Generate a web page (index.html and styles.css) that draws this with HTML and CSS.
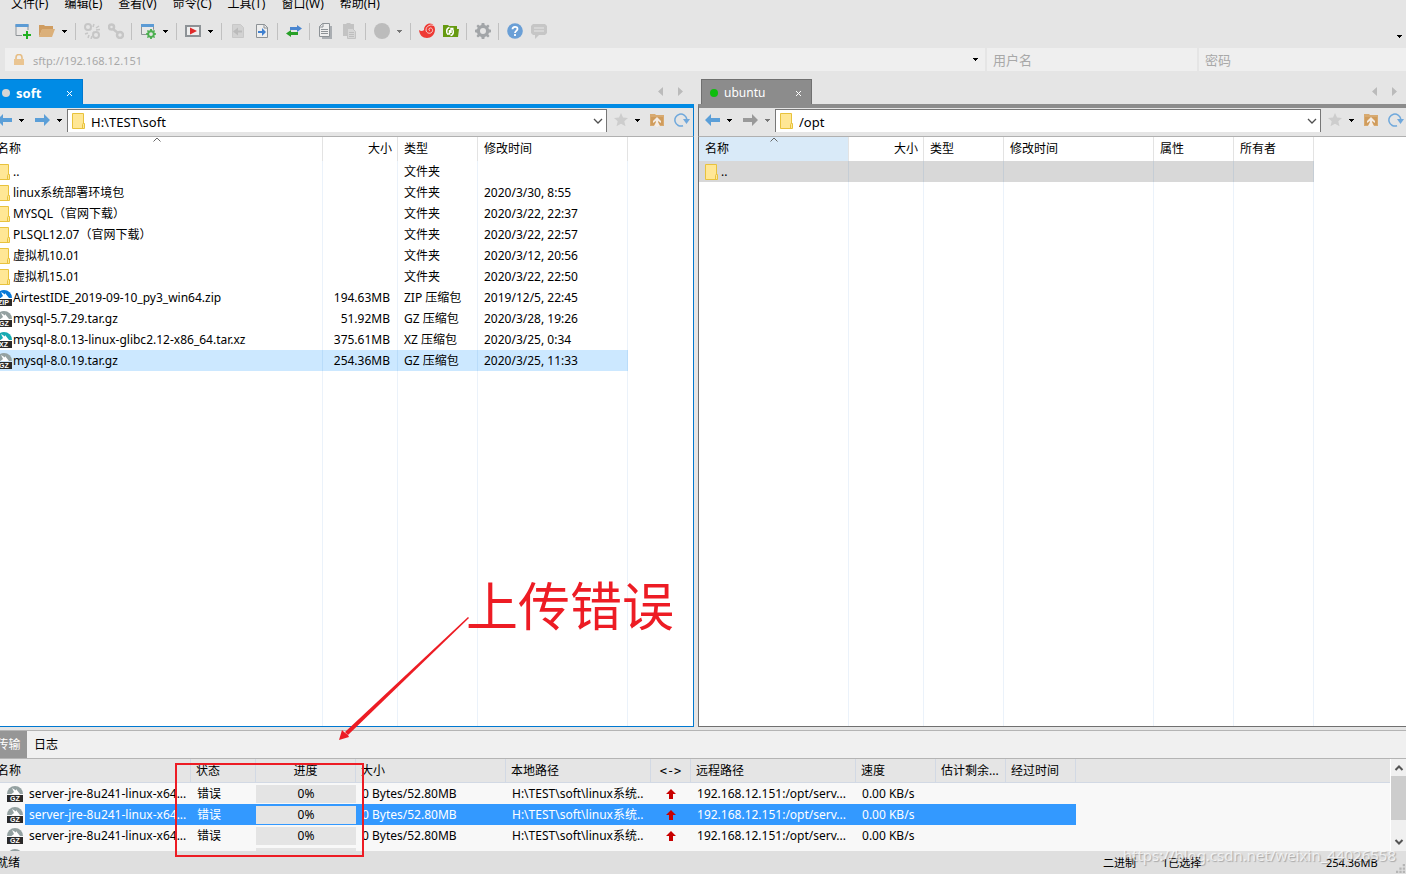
FILE: index.html
```html
<!DOCTYPE html>
<html lang="zh-CN">
<head>
<meta charset="utf-8">
<title>soft</title>
<link rel="stylesheet" href="styles.css">
</head>
<body>
<svg class="defs" aria-hidden="true">
  <symbol id="caret" viewBox="0 0 5 3"><path d="M0 0h5v1H4v1H3v1H2V2H1V1H0z"/></symbol>
  <symbol id="folder" viewBox="0 0 14 16"><path d="M.5.5h11v10h1v5H.5z" fill="#ffe795" stroke="#e8c23c"/><path d="M10.500 15v-3.500l1-1.500" fill="none" stroke="#e8c23c"/></symbol>
  <symbol id="back" viewBox="0 0 16 12"><path d="M0 6l6-6v4h9v4H6v4z"/></symbol>
  <symbol id="forward" viewBox="0 0 16 12"><path d="M15 6L9 0v4H0v4h9v4z"/></symbol>
  <symbol id="star" viewBox="0 0 14 14"><path d="M7 0l2 4.500 5 .5-3.700 3.300 1.200 5L7 10.700l-4.500 2.600 1.200-5L0 5l5-.5z" fill="#cdcdcd"/></symbol>
  <symbol id="up" viewBox="0 0 14 14"><path d="M0 1h5l1 1h8v11H0z" fill="#d8aa70"/><path d="M1 4h12v8H1z" fill="#d09c5c"/><path d="M7 4l4 4v2L8 8v6H6V8l-3 2V8z" fill="#f4ece4"/><path d="M6 9h2l2 4H4z" fill="#f4ece4"/></symbol>
  <symbol id="refresh" viewBox="0 0 16 14"><path d="M9 12.700A6 6 0 1 1 12.800 6" fill="none" stroke="#6fa8dc" stroke-width="1.500"/><path d="M9 6h7l-3.500 5z" fill="#6fa8dc"/></symbol>
  <symbol id="chev" viewBox="0 0 10 6"><path d="M1 1l4 4 4-4" fill="none" stroke="#505050" stroke-width="1.300"/></symbol>
  <symbol id="sort" viewBox="0 0 8 5"><path d="M.5 4.500L4 1l3.500 3.500" fill="none" stroke="#666"/></symbol>
  <symbol id="arch" viewBox="0 0 16 16"><path d="M0 8a8 8 0 0 1 16 0z" fill="currentColor"/><path d="M5 2l4 2.500V3l4 5H4.500l2.500-2z" fill="#fff"/><path d="M0 9h16v7H0z" fill="#2a2a2a"/></symbol>
  <symbol id="gear" viewBox="0 0 16 16"><path fill-rule="evenodd" d="M6.700 0h2.600l.4 2 1.600.7L13 1.500 14.500 3l-1.200 1.700.7 1.600 2 .4v2.600l-2 .4-.7 1.600 1.200 1.700-1.500 1.500-1.700-1.200-1.600.7-.4 2H6.700l-.4-2-1.600-.7L3 14.500 1.500 13l1.200-1.700L2 9.700l-2-.4V6.700l2-.4.700-1.600L1.500 3 3 1.500l1.700 1.200L6.300 2zM8 5a3 3 0 1 0 0 6 3 3 0 0 0 0-6z"/></symbol>
  <symbol id="red-up" viewBox="0 0 10 10"><path d="M5 0l5 5H7v5H3V5H0z" fill="#c80000"/></symbol>
</svg>
<div class="app">
  <nav class="menu">
    <button>文件(F)</button><button>编辑(E)</button><button>查看(V)</button><button>命令(C)</button><button>工具(T)</button><button>窗口(W)</button><button>帮助(H)</button>
  </nav>
  <div class="tools">
    <button class="tool" aria-label="新建"><svg viewBox="0 0 16 16"><path d="M1 1.500h12v11H1z" fill="#e8e8e8" stroke="#8d9296"/><path d="M.5 1h13v3H.5z" fill="#5b9bd5"/><path d="M10 7h4v9h-4zM7 10h9v3H7z" fill="#e5e5e5"/><path d="M11 8h2v3h3v2h-3v3h-2v-3H8v-2h3z" fill="#21b021"/></svg></button>
    <button class="tool" aria-label="打开"><svg viewBox="0 0 16 16"><path d="M0 2h5l1 1h8v4H3L0 14z" fill="#cf9c60"/><path d="M3 6h13l-3 8H0z" fill="#dbb07a"/></svg></button>
    <button class="drop" aria-label="更多"><svg><use href="#caret"/></svg></button><span class="sep"></span>
    <button class="tool" aria-label="重新连接"><svg viewBox="0 0 16 16" fill="none" stroke="#c6c6c6" stroke-width="2"><circle cx="4" cy="4" r="3"/><circle cx="12" cy="12" r="3"/><path d="M6 6l1 1M9 9l1 1"/><path d="M9 4l1-3M12 5l3-2M1 11l3-1M4 15l1-3M12 7l4-.5M7 16l1-3" stroke-width="1.500"/></svg></button>
    <button class="tool" aria-label="断开"><svg viewBox="0 0 16 16" fill="none" stroke="#c6c6c6" stroke-width="2.500"><circle cx="3.500" cy="4" r="2.500"/><circle cx="12" cy="12" r="3"/><path d="M5 6l5 4"/></svg></button><span class="sep"></span>
    <button class="tool" aria-label="属性"><svg viewBox="0 0 16 16"><path d="M1.500 1.500h12v10h-12z" fill="#e8e8e8" stroke="#8d9296"/><path d="M1 1h13v3H1z" fill="#5b9bd5"/><circle cx="11" cy="11" r="5" fill="#e5e5e5"/><use href="#gear" x="6" y="6" width="10" height="10" fill="#4caf50"/></svg></button>
    <button class="drop" aria-label="更多"><svg><use href="#caret"/></svg></button><span class="sep"></span>
    <button class="tool" aria-label="运行"><svg viewBox="0 0 16 16"><path d="M1 3h14v10H1z" fill="#eee" stroke="#8d9296" stroke-width="2"/><path d="M5 4.500l7 3.500-7 3.500z" fill="#e02b2b"/></svg></button>
    <button class="drop" aria-label="更多"><svg><use href="#caret"/></svg></button><span class="sep"></span>
    <button class="tool" aria-label="传回"><svg viewBox="0 0 16 16"><path d="M2.500 1.500h8l3 3v10h-11z" fill="#d2d2d2" stroke="#c8c8c8"/><path d="M3 8.500l5-4v3h4v2H8v3z" fill="#bbb"/></svg></button>
    <button class="tool" aria-label="传送"><svg viewBox="0 0 16 16"><path d="M2.500 1.500h8l3 3v10h-11z" fill="#eee" stroke="#8d9296"/><path d="M10 1v4h4" fill="none" stroke="#8d9296"/><path d="M12 9L8 5v3H4v2h4v3z" fill="#3f80d0"/></svg></button><span class="sep"></span>
    <button class="tool" aria-label="同步"><svg viewBox="0 0 16 16"><path d="M4 4h7V2l5 3.500L11 9V7H4z" fill="#4a86d0"/><path d="M12 9H5V7l-5 3.500L5 14v-2h7z" fill="#28a028"/></svg></button><span class="sep"></span>
    <button class="tool" aria-label="复制"><svg viewBox="0 0 16 16"><path d="M4 3h10v13H4z" fill="#aaaeb2"/><path d="M4.500.5h7v13h-10v-10z" fill="#eee" stroke="#8d9296"/><path d="M1 4h4V0M3 6.500h7M3 8.500h7M3 10.500h7" fill="none" stroke="#8d9296"/></svg></button>
    <button class="tool" aria-label="粘贴"><svg viewBox="0 0 16 16"><path d="M1 1h3l1-1h3l1 1h3v12H1z" fill="#c3c3c3"/><path d="M5.500 5.500h5l3 3v7h-8z" fill="#d6d6d6" stroke="#c3c3c3"/><path d="M7 9.500h5M7 11.500h5M7 13.500h5" stroke="#bdbdbd"/></svg></button><span class="sep"></span>
    <button class="tool" aria-label="停止"><svg viewBox="0 0 16 16"><circle cx="8" cy="8" r="8" fill="#bcbcbc"/></svg></button>
    <button class="drop off" aria-label="更多"><svg><use href="#caret"/></svg></button><span class="sep"></span>
    <button class="tool" aria-label="Xshell"><svg viewBox="0 0 16 16"><path d="M0 7c2 1.500 4 1 5 0C5 3 8 .5 11 .5c3 0 5 3 5 6 0 5-4 8.500-8 8.500-4.500 0-7.500-3-8-8z" fill="#ee3a34"/><path d="M15.500 3C12 .5 7 3 7 7c0 3 4 4.500 6 2 1.500-2 0-4.500-2-4-1.500.5-1.500 2.500 0 2.500" fill="none" stroke="#f6d3d0"/></svg></button>
    <button class="tool" aria-label="Xftp"><svg viewBox="0 0 16 16"><path d="M0 2h5l1 1h8v3h2l-1 8H0z" fill="#669a10"/><path d="M6.500 4.500C3 5 3 10 5 11.500M4 11h2.500V7M7.500 12.500C11 12 11 7 9 5.500M10.500 5.500H8V10" fill="none" stroke="#fff" stroke-width="1.500"/></svg></button><span class="sep"></span>
    <button class="tool" aria-label="选项"><svg viewBox="0 0 16 16"><use href="#gear" fill="#a2a5a8"/></svg></button><span class="sep"></span>
    <button class="tool" aria-label="帮助"><svg viewBox="0 0 16 16"><circle cx="8" cy="8" r="7.800" fill="#6a9fd6"/><path d="M5.500 6.300C5.500 3 10.500 3 10.500 6c0 1.800-2.500 2-2.500 4M8 11v2" fill="none" stroke="#fff" stroke-width="1.800"/></svg></button>
    <button class="tool" aria-label="反馈"><svg viewBox="0 0 16 16"><path d="M2 1h12l2 2v7l-2 2H8l-4 4v-4H2l-2-2V3z" fill="#c6c6c6"/><path d="M3 5h10M3 8h10" stroke="#dcdcdc" stroke-width="1.500"/></svg></button>
    <button class="drop more" aria-label="工具栏选项"><svg><use href="#caret"/></svg></button>
  </div>
  <div class="address">
    <label class="host"><svg viewBox="0 0 10 12"><path d="M2 5V3.500a3 3 0 0 1 6 0V5" fill="none" stroke="#e6bd84" stroke-width="1.600"/><path d="M0 5h10v6H0z" fill="#eac592"/></svg><input aria-label="地址" value="sftp://192.168.12.151"><svg class="caret"><use href="#caret"/></svg></label>
    <input class="user" aria-label="用户名" placeholder="用户名">
    <input class="pass" type="password" aria-label="密码" placeholder="密码">
  </div>
  <main class="panes">
    <section class="pane local">
      <div class="tabs"><button class="tab"><i class="dot"></i><span>soft</span><svg class="x" viewBox="0 0 5 5"><path d="M0 0l5 5M5 0L0 5" stroke="#fff"/></svg></button>
        <div class="pager"><svg viewBox="0 0 25 9"><path d="M5 0v9L0 4.500zM20 0v9l5-4.500z" fill="#bbb"/></svg></div></div>
      <div class="bar">
        <button class="nav" aria-label="后退"><svg><use href="#back"/></svg></button><button class="drop" aria-label="后退记录"><svg><use href="#caret"/></svg></button>
        <button class="nav" aria-label="前进"><svg><use href="#forward"/></svg></button><button class="drop" aria-label="前进记录"><svg><use href="#caret"/></svg></button>
        <label class="path"><svg class="fold"><use href="#folder"/></svg><input aria-label="本地路径" value="H:\TEST\soft"><svg class="chev"><use href="#chev"/></svg></label>
        <button class="act" aria-label="收藏"><svg><use href="#star"/></svg></button><button class="drop" aria-label="收藏夹"><svg><use href="#caret"/></svg></button>
        <button class="act" aria-label="上级"><svg><use href="#up"/></svg></button><button class="act last" aria-label="刷新"><svg><use href="#refresh"/></svg></button>
      </div>
      <div class="list">
        <table>
          <colgroup><col class="w332"><col class="w75"><col class="w80"><col class="w150"><col></colgroup>
          <thead><tr><th>名称<svg class="sort"><use href="#sort"/></svg></th><th class="num">大小</th><th>类型</th><th>修改时间</th><th></th></tr></thead>
          <tbody>
            <tr><td><div class="file"><svg class="fold"><use href="#folder"/></svg>..</div></td><td></td><td>文件夹</td><td></td><td></td></tr>
            <tr><td><div class="file"><svg class="fold"><use href="#folder"/></svg>linux系统部署环境包</div></td><td></td><td>文件夹</td><td>2020/3/30, 8:55</td><td></td></tr>
            <tr><td><div class="file"><svg class="fold"><use href="#folder"/></svg>MYSQL（官网下载）</div></td><td></td><td>文件夹</td><td>2020/3/22, 22:37</td><td></td></tr>
            <tr><td><div class="file"><svg class="fold"><use href="#folder"/></svg>PLSQL12.07（官网下载）</div></td><td></td><td>文件夹</td><td>2020/3/22, 22:57</td><td></td></tr>
            <tr><td><div class="file"><svg class="fold"><use href="#folder"/></svg>虚拟机10.01</div></td><td></td><td>文件夹</td><td>2020/3/12, 20:56</td><td></td></tr>
            <tr><td><div class="file"><svg class="fold"><use href="#folder"/></svg>虚拟机15.01</div></td><td></td><td>文件夹</td><td>2020/3/22, 22:50</td><td></td></tr>
            <tr><td><div class="file"><svg class="arch zip" viewBox="0 0 16 16"><use href="#arch"/><text x="2" y="15">ZIP</text></svg>AirtestIDE_2019-09-10_py3_win64.zip</div></td><td class="num">194.63MB</td><td>ZIP 压缩包</td><td>2019/12/5, 22:45</td><td></td></tr>
            <tr><td><div class="file"><svg class="arch" viewBox="0 0 16 16"><use href="#arch"/><text x="3" y="15">GZ</text></svg>mysql-5.7.29.tar.gz</div></td><td class="num">51.92MB</td><td>GZ 压缩包</td><td>2020/3/28, 19:26</td><td></td></tr>
            <tr><td><div class="file"><svg class="arch xz" viewBox="0 0 16 16"><use href="#arch"/><text x="3" y="15">XZ</text></svg>mysql-8.0.13-linux-glibc2.12-x86_64.tar.xz</div></td><td class="num">375.61MB</td><td>XZ 压缩包</td><td>2020/3/25, 0:34</td><td></td></tr>
            <tr class="sel"><td><div class="file"><svg class="arch" viewBox="0 0 16 16"><use href="#arch"/><text x="3" y="15">GZ</text></svg>mysql-8.0.19.tar.gz</div></td><td class="num">254.36MB</td><td>GZ 压缩包</td><td>2020/3/25, 11:33</td><td></td></tr>
            <tr class="fill"><td></td><td></td><td></td><td></td><td></td></tr>
          </tbody>
        </table>
      </div>
    </section>
    <section class="pane remote">
      <div class="tabs"><button class="tab"><i class="dot"></i><span>ubuntu</span><svg class="x" viewBox="0 0 5 5"><path d="M0 0l5 5M5 0L0 5" stroke="#fff"/></svg></button>
        <div class="pager"><svg viewBox="0 0 25 9"><path d="M5 0v9L0 4.500zM20 0v9l5-4.500z" fill="#bbb"/></svg></div></div>
      <div class="bar">
        <button class="nav" aria-label="后退"><svg><use href="#back"/></svg></button><button class="drop" aria-label="后退记录"><svg><use href="#caret"/></svg></button>
        <button class="nav off" aria-label="前进"><svg><use href="#forward"/></svg></button><button class="drop off" aria-label="前进记录"><svg><use href="#caret"/></svg></button>
        <label class="path"><svg class="fold"><use href="#folder"/></svg><input aria-label="远程路径" value="/opt"><svg class="chev"><use href="#chev"/></svg></label>
        <button class="act" aria-label="收藏"><svg><use href="#star"/></svg></button><button class="drop" aria-label="收藏夹"><svg><use href="#caret"/></svg></button>
        <button class="act" aria-label="上级"><svg><use href="#up"/></svg></button><button class="act last" aria-label="刷新"><svg><use href="#refresh"/></svg></button>
      </div>
      <div class="list">
        <table>
          <colgroup><col class="w150"><col class="w75"><col class="w80"><col class="w150"><col class="w80"><col class="w80"><col></colgroup>
          <thead><tr><th class="sorted">名称<svg class="sort"><use href="#sort"/></svg></th><th class="num">大小</th><th>类型</th><th>修改时间</th><th>属性</th><th>所有者</th><th></th></tr></thead>
          <tbody>
            <tr class="sel"><td><div class="file"><svg class="fold"><use href="#folder"/></svg>..</div></td><td></td><td></td><td></td><td></td><td></td><td></td></tr>
            <tr class="fill"><td></td><td></td><td></td><td></td><td></td><td></td><td></td></tr>
          </tbody>
        </table>
      </div>
    </section>
  </main>
  <section class="transfers">
    <div class="dock"><button class="on">传输</button><button>日志</button></div>
    <div class="queue">
      <div class="rows">
        <table>
          <colgroup><col class="w35"><col class="w166"><col class="w65"><col class="w100"><col class="w150"><col class="w145"><col class="w40"><col class="w165"><col class="w80"><col class="w70"><col class="w70"><col></colgroup>
          <thead><tr><th colspan="2" class="first">名称</th><th>状态</th><th class="mid">进度</th><th>大小</th><th>本地路径</th><th class="mid mono">&lt;-&gt;</th><th>远程路径</th><th>速度</th><th>估计剩余...</th><th>经过时间</th><th></th></tr></thead>
          <tbody>
            <tr><td class="ic"><svg class="arch" viewBox="0 0 16 16"><use href="#arch"/><text x="3" y="15">GZ</text></svg></td><td class="nm">server-jre-8u241-linux-x64...</td><td>错误</td><td class="pg"><div>0%</div></td><td>0 Bytes/52.80MB</td><td>H:\TEST\soft\linux系统..</td><td class="mid"><svg class="red"><use href="#red-up"/></svg></td><td>192.168.12.151:/opt/serv...</td><td>0.00 KB/s</td><td></td><td></td><td></td></tr>
            <tr class="sel"><td class="ic"><svg class="arch" viewBox="0 0 16 16"><use href="#arch"/><text x="3" y="15">GZ</text></svg></td><td class="nm">server-jre-8u241-linux-x64...</td><td>错误</td><td class="pg"><div>0%</div></td><td>0 Bytes/52.80MB</td><td>H:\TEST\soft\linux系统..</td><td class="mid"><svg class="red"><use href="#red-up"/></svg></td><td>192.168.12.151:/opt/serv...</td><td>0.00 KB/s</td><td></td><td></td><td></td></tr>
            <tr><td class="ic"><svg class="arch" viewBox="0 0 16 16"><use href="#arch"/><text x="3" y="15">GZ</text></svg></td><td class="nm">server-jre-8u241-linux-x64...</td><td>错误</td><td class="pg"><div>0%</div></td><td>0 Bytes/52.80MB</td><td>H:\TEST\soft\linux系统..</td><td class="mid"><svg class="red"><use href="#red-up"/></svg></td><td>192.168.12.151:/opt/serv...</td><td>0.00 KB/s</td><td></td><td></td><td></td></tr>
            <tr><td class="ic"><svg class="arch" viewBox="0 0 16 16"><use href="#arch"/></svg></td><td></td><td></td><td class="pg"><div></div></td><td></td><td></td><td></td><td></td><td></td><td></td><td></td><td></td></tr>
          </tbody>
        </table>
      </div>
      <div class="scroll"><svg viewBox="0 0 10 6"><path d="M1.500 5L5 1.500 8.500 5" fill="none" stroke="#555" stroke-width="2"/></svg><i></i><svg viewBox="0 0 10 6"><path d="M1.500 1L5 4.500 8.500 1" fill="none" stroke="#555" stroke-width="2"/></svg></div>
    </div>
  </section>
  <footer class="status"><span class="ready">就绪</span><span class="mode">二进制</span><span class="count">1已选择</span><span class="size">254.36MB</span>
    <svg class="grip" viewBox="0 0 8 8"><path d="M6 0h2v2H6zM3 3h2v2H3zM6 3h2v2H6zM0 6h2v2H0zM3 6h2v2H3zM6 6h2v2H6z" fill="#b5b5b5"/></svg></footer>
  <div class="note">上传错误</div>
  <svg class="arrow" viewBox="0 0 130 124"><path d="M130 1L9 118l-3-3L129 0z" fill="#ed1c24"/><path d="M0 123l3-10 2 2 4 3 1 2z" fill="#ed1c24"/></svg>
  <div class="frame"></div>
  <div class="mark">https://blog.csdn.net/weixin_44026558</div>
</div>
</body>
</html>
```

FILE: styles.css
```css
* { box-sizing: border-box; }
html, body { height: 100%; }
body {
  margin: 0;
  overflow: hidden;
  background: #e5e5e5;
  color: #000;
  font: 12px/16px "Noto Sans", "Noto Sans CJK SC", sans-serif;
}
button, input {
  margin: 0;
  padding: 0;
  border: 0;
  background: none;
  color: inherit;
  font: inherit;
}
svg { display: block; flex: none; }
.defs { position: absolute; width: 0; height: 0; }

/* The window sits partly past the left edge of the screen. */
.app {
  position: relative;
  display: flex;
  flex-direction: column;
  height: 100%;
  margin-left: -10px;
  overflow: hidden;
}

.menu {
  display: flex;
  flex: none;
  align-items: flex-end;
  gap: 16px;
  height: 12px;
  padding-left: 21px;
}

.tools {
  display: flex;
  flex: none;
  align-items: center;
  height: 36px;
  padding: 2px 0 0 21px;
}
.tool { display: flex; justify-content: center; width: 24px; }
.tool svg { width: 16px; height: 16px; }
.drop { display: flex; width: 13px; padding-left: 3px; }
.drop svg, .caret { width: 5px; height: 3px; fill: #000; }
.drop.off svg { fill: #777; }
.more { width: 7px; margin: 10px 2px 0 auto; padding: 0; }
.sep { width: 8px; height: 17px; background: linear-gradient(#c0c0c0, #c0c0c0) 3px 0 / 1px 100% no-repeat; }

.address {
  display: flex;
  flex: none;
  gap: 2px;
  height: 23px;
  padding-left: 15px;
}
.address > * { height: 23px; background: #efefef; }
.address input { min-width: 0; color: #a8a8a8; }
.host { display: flex; flex: 964; align-items: center; gap: 9px; padding: 0 7px 0 9px; }
.host svg { width: 10px; height: 12px; }
.host .caret { width: 5px; height: 3px; }
.host input { flex: 1; padding-top: 2px; font-size: 11px; }
.user { flex: 204; padding-left: 6px; font-size: 13px; }
.pass { flex: 201; padding-left: 6px; font-size: 13px; }
.address input::placeholder { color: #a8a8a8; opacity: 1; }

.panes {
  display: grid;
  grid-template-columns: minmax(0, 704fr) minmax(0, 708fr);
  gap: 4px;
  flex: 1;
  min-height: 0;
  padding-top: 8px;
}
.pane { display: flex; flex-direction: column; min-width: 0; min-height: 0; --tone: #8c8c8c; --edge: #707070; }
.local { --tone: #008be5; --edge: #0078d0; }
.tabs { display: flex; align-items: flex-end; flex: none; height: 25px; padding-left: 3px; }
.local .tabs { padding-left: 0; }
.tab {
  display: flex;
  align-items: center;
  height: 25px;
  padding: 2px 10px 0 11px;
  border: 1px solid var(--edge);
  border-bottom: 0;
  background: var(--tone);
  color: #fff;
  font-size: 13px;
}
.local .tab { font-weight: bold; }
.remote .tab { padding-left: 8px; font-size: 12px; }
.tab span { margin: 0 26px 0 6px; }
.remote .tab span { margin-right: 31px; }
.dot { width: 8px; height: 8px; border-radius: 4px; background: #d5d5d5; }
.remote .dot { background: #0dbd0d; }
.x { width: 5px; height: 5px; }
.pager { margin: 0 11px 8px auto; }
.remote .pager { margin-right: 9px; }
.pager svg { width: 25px; height: 9px; }
.bar {
  display: flex;
  flex: none;
  align-items: center;
  height: 33px;
  border-top: 4px solid var(--tone);
  border-right: 1px solid var(--edge);
  border-left: 1px solid var(--edge);
  border-bottom: 1px solid #b0b0b0;
  padding: 0 3px 4px 6px;
}
.remote .bar { border-right: 0; padding-right: 2px; }
.nav svg { width: 16px; height: 12px; fill: #5b9fd8; }
.nav.off svg { fill: #999; }
.bar .drop { width: 22px; justify-content: center; padding: 0 3px 0 0; }
.bar .nav + .drop { width: 16px; padding: 0; }
.drop + .nav { margin-left: 6px; }
.path {
  display: flex;
  flex: 1;
  align-items: center;
  height: 23px;
  min-width: 0;
  margin-right: 7px;
  padding: 1px 3px 0 4px;
  border: solid #777;
  border-width: 1px 1px 0;
  background: #fff;
}
.path input { flex: 1; min-width: 0; padding: 2px 0 0 5px; font-size: 13px; }
.fold { width: 14px; height: 16px; }
.chev { width: 10px; height: 6px; }
.act svg { width: 14px; height: 14px; }
.act + .act { margin-left: 10px; }
.act.last svg { width: 16px; }

.list {
  flex: 1;
  min-height: 0;
  overflow: hidden;
  border: 1px solid var(--edge);
  border-top: 0;
  background: #fff;
}
.remote .list { border-right: 0; }
table { width: 100%; border-collapse: separate; border-spacing: 0; table-layout: fixed; }
.list table { height: 100%; }
th, td { padding: 0 0 0 6px; border-right: 1px solid #ebf2fa; text-align: left; font-weight: normal; white-space: nowrap; overflow: hidden; }
th:last-child, td:last-child { border-right: 0; }
tr { height: 21px; }
td { height: 21px; }
.list thead tr, .list th { height: 24px; border-color: #e3e3e3; }
.list .fill, .fill td { height: auto; }
th { position: relative; }
.sort { position: absolute; top: 0; left: calc(50% - 4px); width: 8px; height: 5px; }
.sorted { background: #d9eaf8; }
.num { padding-right: 7px; text-align: right; }
th.num { padding-right: 5px; }
.file { display: flex; align-items: center; gap: 2px; }
.file .arch { margin: 0 -1px 0 -1px; }
.arch { width: 16px; height: 16px; color: #94a1a1; }
.arch text { fill: #fff; font: bold 7px/7px "Liberation Sans", sans-serif; }
.zip { color: #0878d8; }
.xz { color: #17aab2; }
.local .sel td:not(:last-child) { background: #cce8ff; border-color: #b9dcfa; }
.remote .sel td:not(:last-child) { background: #d8d8d8; border-color: #c5cdd5; }

.w35 { width: 35px; }
.w40 { width: 40px; }
.w65 { width: 65px; }
.w70 { width: 70px; }
.w75 { width: 75px; }
.w80 { width: 80px; }
.w100 { width: 100px; }
.w145 { width: 145px; }
.w150 { width: 150px; }
.w165 { width: 165px; }
.w166 { width: 166px; }
.w332 { width: 332px; }

.transfers { flex: none; margin-top: 3px; border-top: 1px solid #b4b4b4; }
.dock { display: flex; height: 28px; border-bottom: 1px solid #b4b4b4; background: #f0f0f0; }
.dock button { padding: 0 7px; }
.dock .on { width: 37px; padding: 0 6px; background: #969696; color: #fff; }
.queue { display: flex; height: 92px; }
.rows { flex: 1; min-width: 0; overflow: hidden; background: #f8f8f8; }
.rows thead tr, .rows th { height: 24px; }
.rows th { padding-left: 5px; background: #e5e5e5; border-right-color: #d2d9e4; border-bottom: 1px solid #d2d9e4; }
.rows .first { padding-left: 7px; }
.rows td { border: 0; }
.rows td.nm { padding-left: 4px; }
.rows .ic { padding-left: 17px; }
.rows .mid { padding-left: 0; text-align: center; }
.mono { font: 12px/16px "DejaVu Sans Mono", monospace; }
.red { width: 10px; height: 10px; margin: 0 auto; }
.rows td.pg { padding: 0; }
.pg div { height: 18px; line-height: 18px; background: #e4e4e4; color: #000; text-align: center; }
.rows .sel td:not(:last-child):not(.ic) { background: #3399ff; color: #fff; }
.scroll {
  display: flex;
  flex-direction: column;
  align-items: center;
  width: 16px;
  padding: 6px 0;
  border-left: 1px solid #fff;
  background: #f0f0f0;
}
.scroll svg { width: 10px; height: 6px; }
.scroll i { width: 15px; height: 44px; margin: 5px 0 auto; background: #cdcdcd; }

.status { display: flex; flex: none; align-items: center; height: 23px; padding: 0 1px 0 6px; background: #dfdfdf; font-size: 11px; }
.ready { flex: 1; font-size: 12px; }
.mode { width: 59px; }
.count { width: 164px; }
.size { width: 70px; }
.grip { align-self: flex-end; width: 9px; height: 9px; margin-bottom: 1px; }

/* Annotations drawn over the window. */
.note { position: absolute; top: 576px; left: 476px; color: #ed1c24; font-size: 52px; line-height: 60px; white-space: nowrap; }
.arrow { position: absolute; top: 617px; left: 349px; width: 130px; height: 124px; }
.frame { position: absolute; top: 763px; left: 185px; width: 189px; height: 94px; border: 2px solid #ed1c24; }
.mark { position: absolute; right: 10px; bottom: 9px; color: rgba(255, 255, 255, 0.7); font-size: 15px; line-height: 20px; text-shadow: 1px 1px 1px rgba(0, 0, 0, 0.25); }
```
